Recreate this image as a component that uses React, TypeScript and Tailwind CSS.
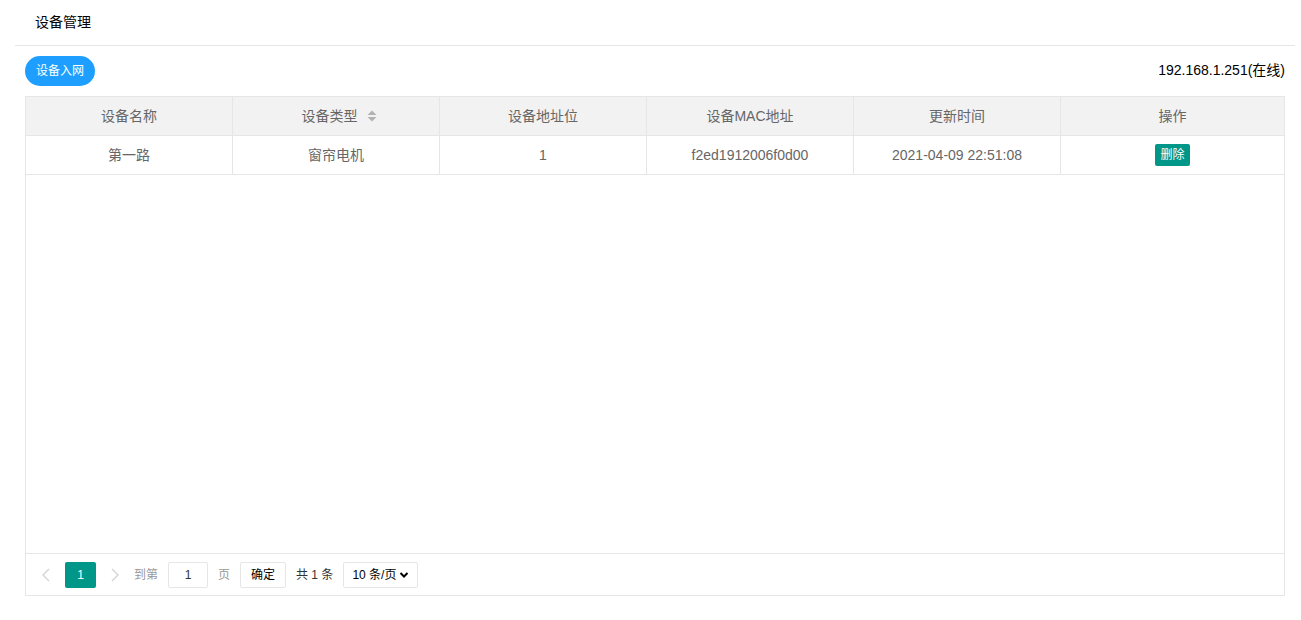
import React from "react";

const columns = ["设备名称", "设备类型", "设备地址位", "设备MAC地址", "更新时间", "操作"];

const rows = [
  {
    name: "第一路",
    type: "窗帘电机",
    addr: "1",
    mac: "f2ed1912006f0d00",
    time: "2021-04-09 22:51:08",
  },
];

const font = { fontFamily: '"Liberation Sans", Arial, "Noto Sans CJK SC", sans-serif' };

function SortIcon() {
  return (
    <svg width="10" height="12" viewBox="0 0 10 12" className="ml-[9px] inline-block">
      <path d="M5 0.5 L9.5 5 H0.5 Z" fill="#b2b2b2" />
      <path d="M5 11.5 L9.5 7 H0.5 Z" fill="#b2b2b2" />
    </svg>
  );
}

export default function App() {
  return (
    <div className="min-h-[620px] bg-white text-[14px]" style={font}>
      <div className="ml-[15px] mr-[6px] flex h-[46px] items-center border-b border-[#e6e6e6] px-[20px] text-[14px] text-[#000]">
        设备管理
      </div>
      <div className="pl-[25px] pr-[16px] pt-[10px]">
        <div className="flex items-end justify-between">
          <button className="h-[30px] rounded-full bg-[#1E9FFF] px-[11px] text-[12px] text-white">
            设备入网
          </button>
          <span className="pb-[5px] text-[14px] text-[#000]">192.168.1.251(在线)</span>
        </div>
        <div className="mt-[10px] flex h-[500px] flex-col border border-[#e6e6e6]">
          <div className="flex-1">
            <div className="grid h-[39px] grid-cols-[207px_207px_207px_207px_207px_1fr] border-b border-[#e6e6e6] bg-[#f2f2f2] text-[#666]">
              {columns.map((c, i) => (
                <div
                  key={c}
                  className={
                    "flex items-center justify-center " +
                    (i < 5 ? "border-r border-[#e6e6e6] " : "") +
                    (i === 1 ? "pl-[6px]" : "")
                  }
                >
                  {c}
                  {i === 1 && <SortIcon />}
                </div>
              ))}
            </div>
            {rows.map((r) => (
              <div
                key={r.mac}
                className="grid h-[39px] grid-cols-[207px_207px_207px_207px_207px_1fr] border-b border-[#e6e6e6] text-[#666]"
              >
                <div className="flex items-center justify-center border-r border-[#e6e6e6]">{r.name}</div>
                <div className="flex items-center justify-center border-r border-[#e6e6e6]">{r.type}</div>
                <div className="flex items-center justify-center border-r border-[#e6e6e6]">{r.addr}</div>
                <div className="flex items-center justify-center border-r border-[#e6e6e6]">{r.mac}</div>
                <div className="flex items-center justify-center border-r border-[#e6e6e6]">{r.time}</div>
                <div className="flex items-center justify-center">
                  <button className="h-[22px] rounded-[2px] bg-[#009688] px-[5px] text-[12px] text-white">
                    删除
                  </button>
                </div>
              </div>
            ))}
          </div>
          <div className="flex h-[42px] items-center border-t border-[#e6e6e6] px-[14px] text-[12px] text-[#333]">
            <span className="flex w-[25px] justify-start pl-[2px]">
              <svg width="8" height="14" viewBox="0 0 8 14">
                <path d="M7 1 L1 7 L7 13" stroke="#d2d2d2" strokeWidth="1.3" fill="none" />
              </svg>
            </span>
            <span className="flex h-[26px] w-[31px] items-center justify-center rounded-[2px] bg-[#009688] text-white">
              1
            </span>
            <span className="flex w-[38px] justify-center">
              <svg width="8" height="14" viewBox="0 0 8 14">
                <path d="M1 1 L7 7 L1 13" stroke="#d2d2d2" strokeWidth="1.3" fill="none" />
              </svg>
            </span>
            <span className="text-[#999]">到第</span>
            <span className="ml-[10px] flex h-[26px] w-[40px] items-center justify-center rounded-[2px] border border-[#e6e6e6] text-[#333]">
              1
            </span>
            <span className="ml-[10px] text-[#999]">页</span>
            <span className="ml-[10px] flex h-[26px] w-[46px] items-center justify-center rounded-[2px] border border-[#e6e6e6] text-[#000]">
              确定
            </span>
            <span className="ml-[10px] text-[#333]">共 1 条</span>
            <span className="ml-[10px] flex h-[26px] w-[75px] items-center justify-between rounded-[2px] border border-[#e6e6e6] px-[8px] text-[#000]">
              10 条/页
              <svg width="10" height="8" viewBox="0 0 10 8">
                <path d="M1.5 2 L5 5.5 L8.5 2" stroke="#000" strokeWidth="2" fill="none" />
              </svg>
            </span>
          </div>
        </div>
      </div>
    </div>
  );
}
